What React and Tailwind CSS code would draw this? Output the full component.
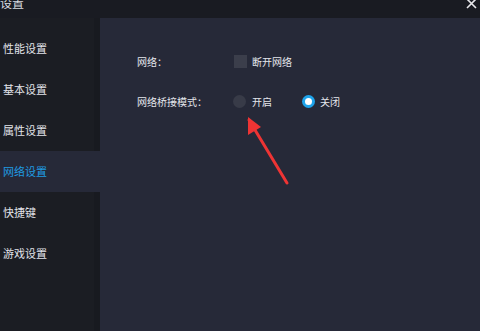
const menu = ["性能设置", "基本设置", "属性设置", "网络设置", "快捷键", "游戏设置"];

export default function App() {
    const active = "网络设置";
    return (
        <div
            className="w-[480px] h-[331px] flex flex-col overflow-hidden bg-[#262938] text-[#e4e6ec]"
            style={{ fontFamily: '"Noto Sans CJK SC", "Noto Sans", sans-serif' }}
        >
            {/* title bar */}
            <div className="h-[18px] shrink-0 bg-[#191b22] flex items-start justify-between relative">
                <span className="text-[12px] leading-[12px] -mt-[3px] text-[#d8dae0]">设置</span>
                <svg className="absolute right-[3px] -top-[2px]" width="11" height="11" viewBox="0 0 11 11">
                    <path d="M1 1 L10 10 M10 1 L1 10" stroke="#e8e8ec" strokeWidth="1.6" />
                </svg>
            </div>

            <div className="flex flex-1">
                {/* sidebar */}
                <div className="w-[100px] flex flex-col bg-[#1b1d23] border-r-[6px] border-[#181a20] pt-[10px]">
                    {menu.map((m) =>
                        m === active ? (
                            <div
                                key={m}
                                className="h-[41px] -mr-[6px] flex items-center pl-[3px] bg-[#262938] text-[#1f9be2] text-[11px]"
                            >
                                {m}
                            </div>
                        ) : (
                            <div key={m} className="h-[41px] flex items-center pl-[3px] text-[11px] text-[#e2e4ea]">
                                {m}
                            </div>
                        )
                    )}
                </div>

                {/* content */}
                <div className="flex-1 relative pl-[37px] pt-[36px] text-[10px]">
                    <div className="flex items-center h-[14px]">
                        <span className="w-[97px]">网络：</span>
                        <span className="w-[13px] h-[13px] bg-[#3b3e4b] mr-[5px]" />
                        <span>断开网络</span>
                    </div>
                    <div className="flex items-center h-[14px] mt-[26px]">
                        <span className="w-[96px]">网络桥接模式：</span>
                        <span className="w-[13px] h-[13px] rounded-full bg-[#383b48] mr-[6px]" />
                        <span className="mr-[30px]">开启</span>
                        <span className="w-[13px] h-[13px] rounded-full bg-[#1ea3ea] flex items-center justify-center mr-[5px]">
                            <span className="w-[7px] h-[7px] rounded-full bg-white" />
                        </span>
                        <span>关闭</span>
                    </div>

                    {/* red annotation arrow */}
                    <svg className="absolute left-[140px] top-[96px]" width="50" height="72" viewBox="0 0 50 72">
                        <path d="M9 6 L47 69" stroke="#ee3434" strokeWidth="3" strokeLinecap="round" />
                        <path d="M8 3 L21 13 L8 21 Z" fill="#ee3434" />
                    </svg>
                </div>
            </div>
        </div>
    );
}
